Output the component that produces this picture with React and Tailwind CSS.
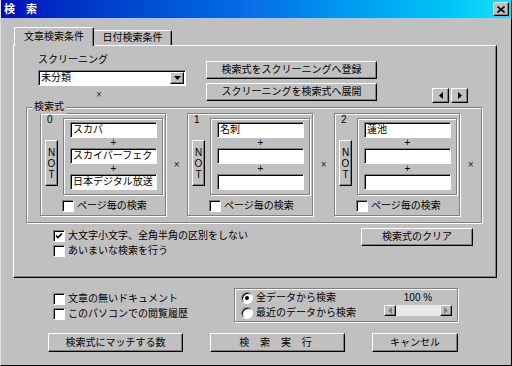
import React from 'react';

const raised = 'bg-[#c0c0c0] border border-t-white border-l-white border-r-black border-b-black shadow-[inset_-1px_-1px_0_#808080]';
const sunken = 'bg-white border border-t-[#808080] border-l-[#808080] border-r-white border-b-white shadow-[inset_1px_1px_0_#000]';
const etched = 'border border-[#808080] shadow-[inset_1px_1px_0_#fff,1px_1px_0_#fff]';

const CheckBox = ({ checked, label }) => (
  <div className="flex items-center gap-[3px] h-[15px]">
    <div className={`${sunken} w-[12px] h-[12px] flex items-center justify-center`}>
      {checked && (
        <svg width="8" height="8" viewBox="0 0 8 8">
          <path d="M1 3.5 L3 5.5 L7 1.5" stroke="#000" strokeWidth="1.6" fill="none" />
        </svg>
      )}
    </div>
    <span className="whitespace-nowrap">{label}</span>
  </div>
);

const Radio = ({ checked, label }) => (
  <div className="flex items-center gap-[3px] h-[15px]">
    <div className="w-[12px] h-[12px] rounded-full bg-white border border-t-[#808080] border-l-[#808080] border-r-white border-b-white shadow-[inset_1px_1px_0_#000] flex items-center justify-center">
      {checked && <div className="w-[4px] h-[4px] rounded-full bg-black" />}
    </div>
    <span className="whitespace-nowrap">{label}</span>
  </div>
);

const Input = ({ value }) => (
  <div className={`${sunken} w-[87px] h-[16px] px-[2px] leading-[14px] whitespace-nowrap overflow-hidden`}>
    {value}
  </div>
);

const Plus = () => <div className="h-[10px] leading-[10px] text-center w-[87px]">+</div>;

const ExprBox = ({ no, words }) => (
  <div className={`${etched} w-[127px] h-[103px] flex flex-col`}>
    <div className="flex">
      <div className="w-[22px] flex flex-col">
        <div className="h-[12px] leading-[12px] pl-[6px]">{no}</div>
        <div className={`${raised} ml-[4px] mt-[14px] w-[13px] h-[46px] flex flex-col items-center justify-center leading-[11px]`}>
          <span>N</span>
          <span>O</span>
          <span>T</span>
        </div>
      </div>
      <div className={`${etched} mt-[4px] w-[100px] h-[77px] pt-[3px] pl-[6px]`}>
        <Input value={words[0]} />
        <Plus />
        <Input value={words[1]} />
        <Plus />
        <Input value={words[2]} />
      </div>
    </div>
    <div className="mt-[3px] ml-[21px]">
      <CheckBox label="ページ毎の検索" />
    </div>
  </div>
);

const Cross = () => <div className="w-[21px] text-center self-center text-[#202020]">×</div>;

const Tri = ({ dir, color = '#000' }) => (
  <svg width="4" height="7" viewBox="0 0 4 7">
    {dir === 'left' ? <path d="M4 0 L0 3.5 L4 7 Z" fill={color} /> : <path d="M0 0 L4 3.5 L0 7 Z" fill={color} />}
  </svg>
);

export default function App() {
  return (
    <div className="w-[512px] h-[366px] overflow-hidden bg-[#c0c0c0] border-x border-b border-l-[#dfdfdf] border-r-black border-b-black flex flex-col font-['Liberation_Sans','Noto_Sans_CJK_JP',sans-serif] text-[10px] leading-[14px] text-black">
      {/* title bar */}
      <div className="h-[18px] -mx-px flex items-center justify-between pl-[4px] pr-[3px] bg-linear-to-r from-[#0008b8] via-[#0a70e8] to-[#18e0fa]">
        <span className="text-white font-bold text-[11px] tracking-[4px]">検 索</span>
        <div className={`${raised} w-[16px] h-[14px] flex items-center justify-center`}>
          <svg width="8" height="7" viewBox="0 0 8 7">
            <path d="M0.5 0.5 L7.5 6.5 M7.5 0.5 L0.5 6.5" stroke="#000" strokeWidth="1.6" />
          </svg>
        </div>
      </div>

      {/* tabs */}
      <div className="mt-[9px] ml-[13px] flex items-end h-[19px]">
        <div className="relative z-10 h-[19px] w-[80px] bg-[#c0c0c0] border-t border-l border-t-white border-l-white border-r border-r-black shadow-[inset_-1px_0_0_#808080] rounded-t-[2px] flex items-center justify-center">
          文章検索条件
        </div>
        <div className="h-[15px] w-[78px] mb-px border-t border-t-white border-r border-r-black shadow-[inset_-1px_0_0_#808080] rounded-tr-[2px] flex items-center justify-center">
          日付検索条件
        </div>
      </div>

      {/* panel */}
      <div className="-mt-px ml-[12px] w-[484px] h-[233px] border border-t-white border-l-white border-r-black border-b-black shadow-[inset_-1px_-1px_0_#808080] flex flex-col">
        <div className="h-[55px] flex pl-[24px]">
          <div className="w-[148px] pt-[7px]">
            <div>スクリーニング</div>
            <div className={`${sunken} mt-[3px] h-[16px] flex items-center justify-between pl-[2px] pr-[1px]`}>
              <span>未分類</span>
              <div className={`${raised} w-[14px] h-[12px] flex items-center justify-center`}>
                <svg width="7" height="4" viewBox="0 0 7 4"><path d="M0 0 L7 0 L3.5 4 Z" fill="#000" /></svg>
              </div>
            </div>
            <div className="ml-[58px] mt-[2px] text-[#303030]">×</div>
          </div>
          <div className="ml-[20px] pt-[15px] flex flex-col gap-[4px]">
            <div className={`${raised} w-[171px] h-[19px] flex items-center justify-center`}>検索式をスクリーニングへ登録</div>
            <div className={`${raised} w-[171px] h-[19px] flex items-center justify-center`}>スクリーニングを検索式へ展開</div>
          </div>
          <div className="ml-[55px] mt-[42px] flex gap-[2px]">
            <div className={`${raised} w-[17px] h-[15px] flex items-center justify-center`}><Tri dir="left" /></div>
            <div className={`${raised} w-[17px] h-[15px] flex items-center justify-center`}><Tri dir="right" /></div>
          </div>
        </div>

        {/* 検索式 group */}
        <div className={`${etched} relative mt-[6px] ml-[12px] w-[456px] h-[116px] pl-[13px] pt-[5px]`}>
          <span className="absolute -top-[8px] left-[5px] px-[2px] bg-[#c0c0c0]">検索式</span>
          <div className="flex">
            <ExprBox no="0" words={['スカパ', 'スカイパーフェク', '日本デジタル放送']} />
            <Cross />
            <ExprBox no="1" words={['名刺', '', '']} />
            <Cross />
            <ExprBox no="2" words={['蓮池', '', '']} />
            <Cross />
          </div>
        </div>

        <div className="flex mt-[5px] pl-[39px]">
          <div className="flex flex-col">
            <CheckBox checked label="大文字小文字、全角半角の区別をしない" />
            <CheckBox label="あいまいな検索を行う" />
          </div>
          <div className={`${raised} ml-auto mr-[23px] w-[112px] h-[18px] flex items-center justify-center`}>検索式のクリア</div>
        </div>
      </div>

      {/* bottom options */}
      <div className="flex mt-[10px] pl-[52px]">
        <div className="w-[181px] pt-[3px] flex flex-col">
          <CheckBox label="文章の無いドキュメント" />
          <CheckBox label="このパソコンでの閲覧履歴" />
        </div>
        <div className={`${etched} w-[224px] h-[34px] flex`}>
          <div className="pl-[6px] pt-[1px] flex flex-col">
            <Radio checked label="全データから検索" />
            <Radio label="最近のデータから検索" />
          </div>
          <div className="ml-auto mr-[5px] w-[68px] flex flex-col">
            <div className="text-center pt-[2px] h-[16px] leading-[14px]">100 %</div>
            <div className="flex h-[11px]">
              <div className={`${raised} w-[12px] h-[11px] flex items-center justify-center`}><Tri dir="left" color="#808080" /></div>
              <div className="flex-1 bg-[#e8e8e8]" />
              <div className={`${raised} w-[12px] h-[11px] flex items-center justify-center`}><Tri dir="right" color="#808080" /></div>
            </div>
          </div>
        </div>
      </div>

      {/* buttons */}
      <div className="flex mt-[11px] pl-[47px] gap-[27px]">
        <div className={`${raised} w-[135px] h-[19px] flex items-center justify-center`}>検索式にマッチする数</div>
        <div className={`${raised} w-[135px] h-[19px] flex items-center justify-center tracking-[4px]`}>検 索 実 行</div>
        <div className={`${raised} w-[86px] h-[19px] flex items-center justify-center`}>キャンセル</div>
      </div>
    </div>
  );
}
